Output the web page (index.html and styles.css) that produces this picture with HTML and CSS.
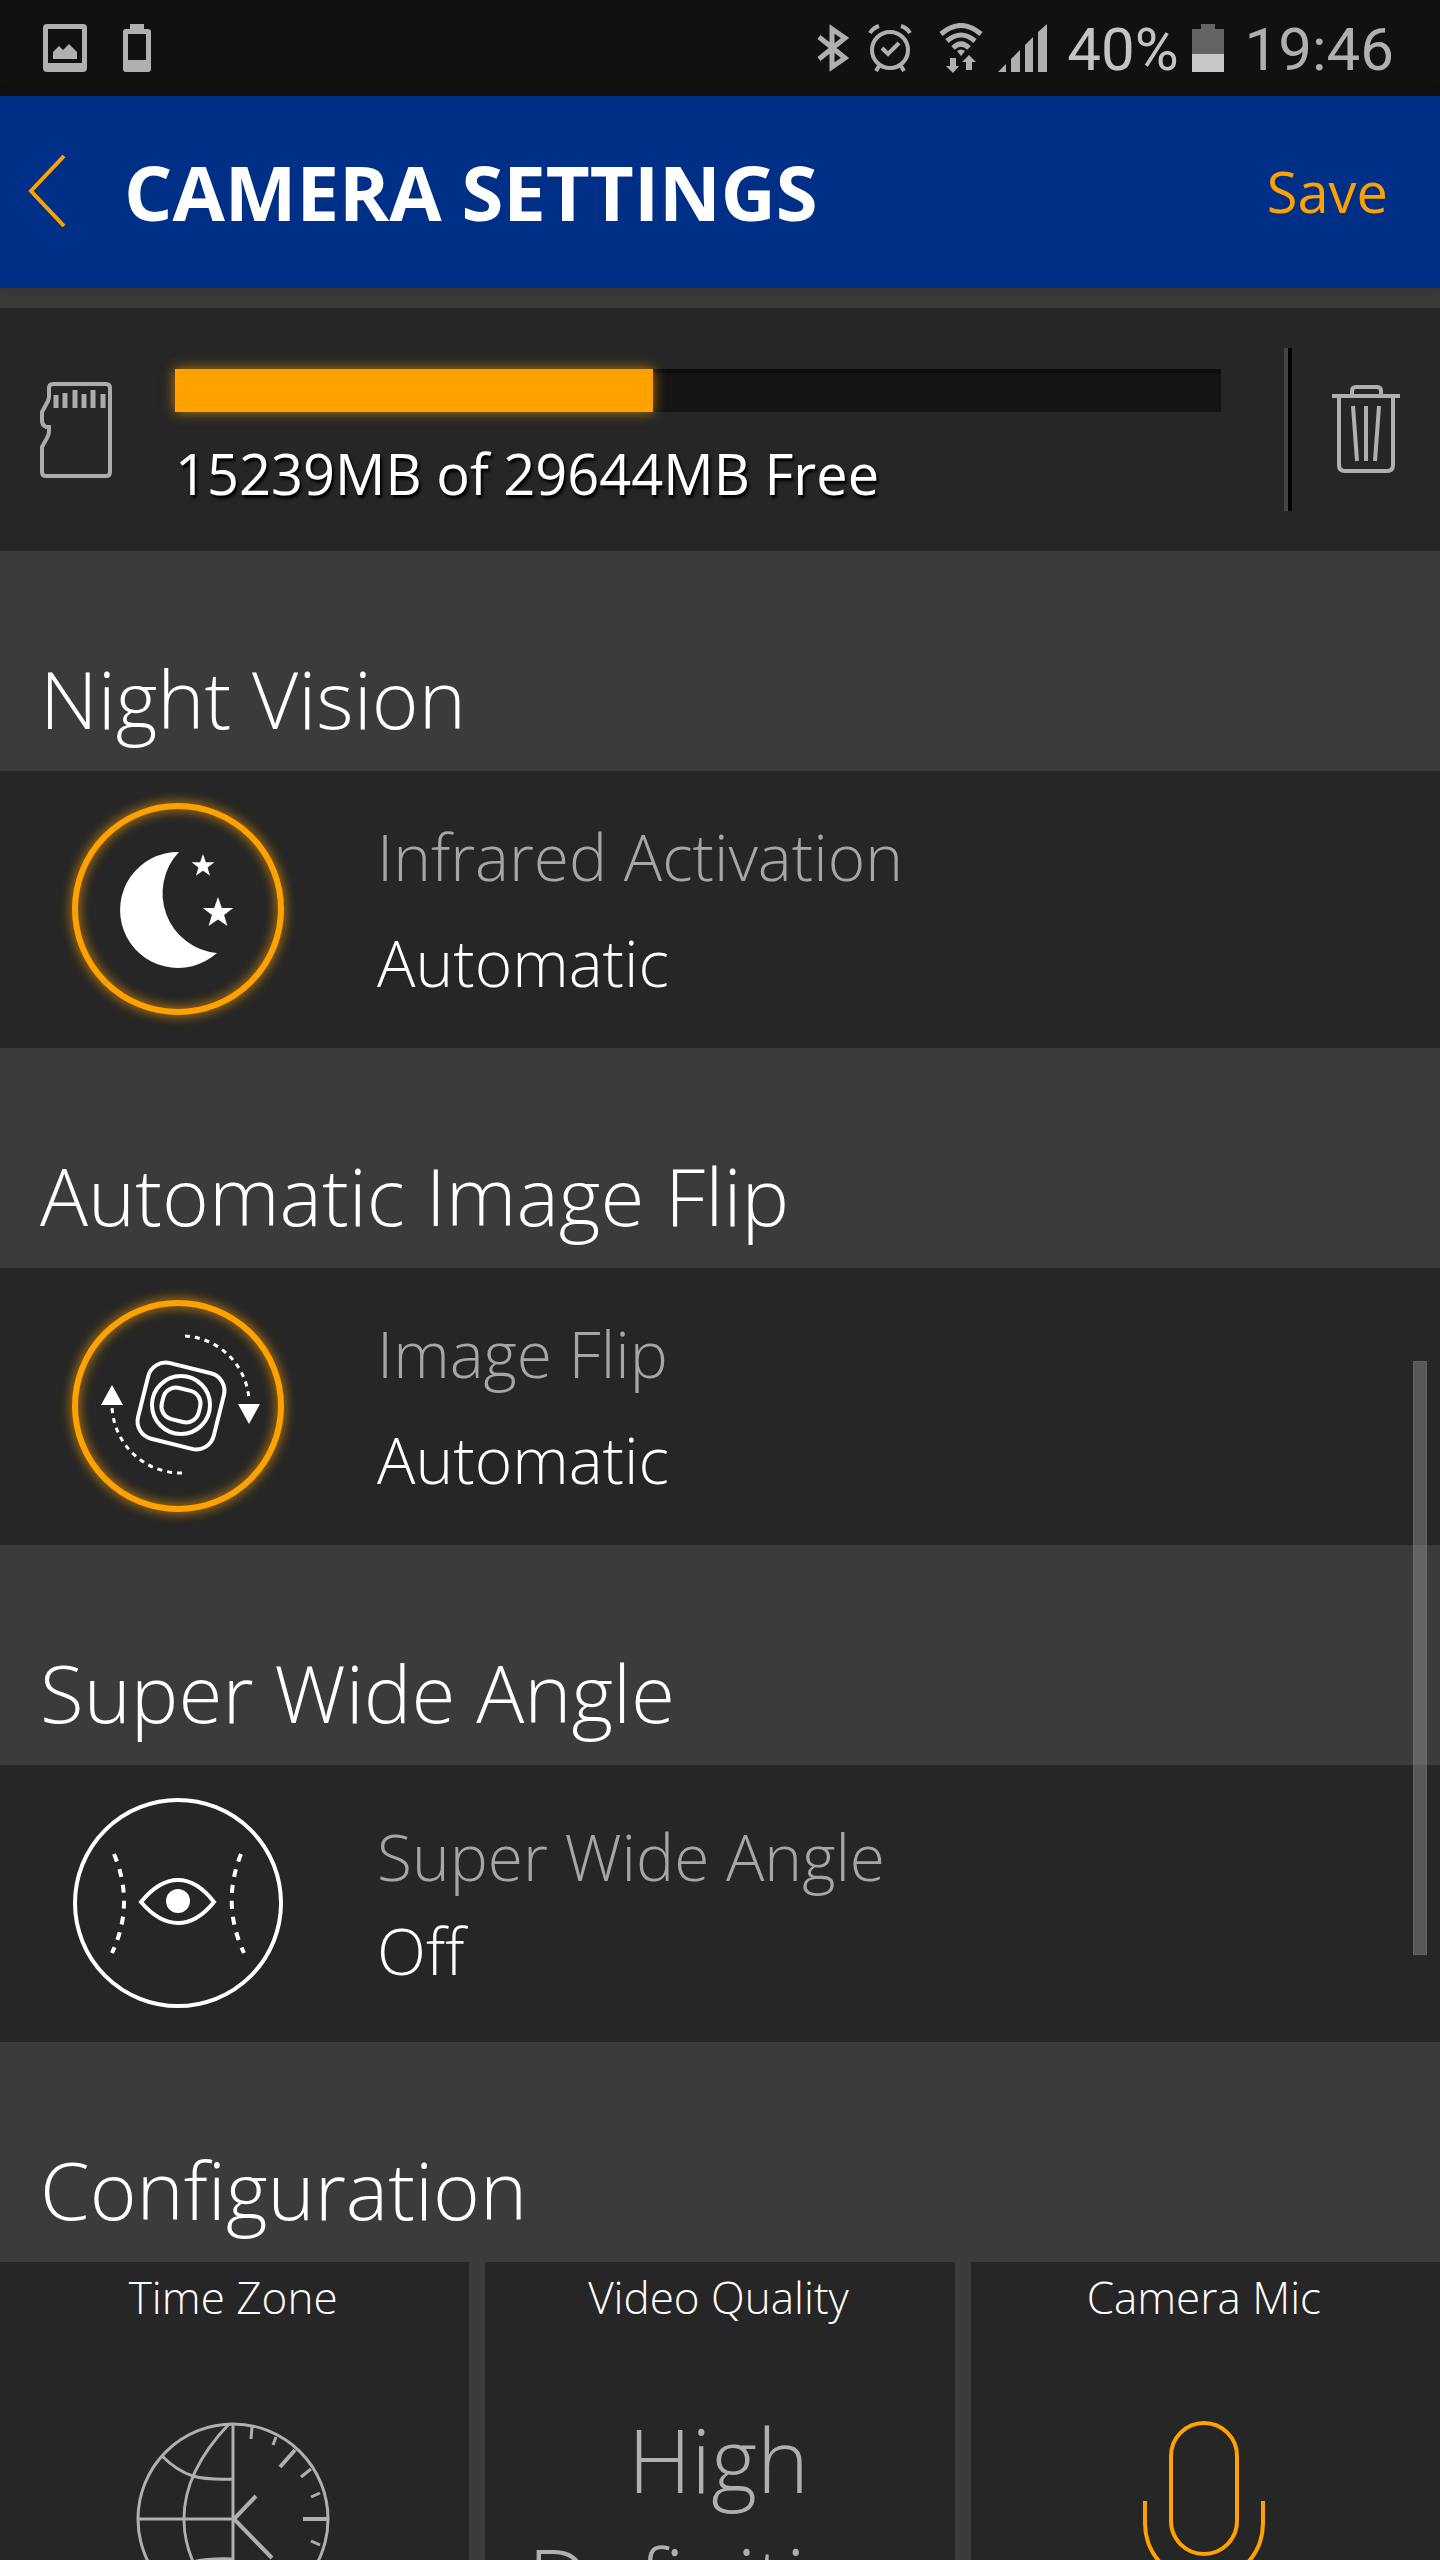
FILE: index.html
```
<!DOCTYPE html>
<html lang="en">
  <head>
    <meta charset="UTF-8" />
    <meta name="viewport" content="width=device-width, initial-scale=1.0" />
    <title>Camera Settings</title>
    <link rel="stylesheet" href="styles.css">
  </head>
  <body>
    <div class="status-bar">
      <div class="status-left">
        <svg width="44" height="48" viewBox="0 0 44 48" fill="#b0b0b0">
          <path fill-rule="evenodd" d="M4 0H40a4 4 0 0 1 4 4V44a4 4 0 0 1-4 4H4a4 4 0 0 1-4-4V4a4 4 0 0 1 4-4zM5 5V39H39V5z" />
          <path d="M10 35V28L16 22L20 26L26 20L34 28V35z" />
        </svg>
        <svg width="28" height="48" viewBox="0 0 28 48" fill="#b0b0b0">
          <path fill-rule="evenodd" d="M7 0H21V5H25a3 3 0 0 1 3 3V45a3 3 0 0 1-3 3H3a3 3 0 0 1-3-3V8a3 3 0 0 1 3-3H7zM5 10V36H23V10z" />
        </svg>
      </div>
      <div class="status-right">
        <svg class="bluetooth" width="32" height="48" viewBox="0 0 32 48" fill="none" stroke="#b0b0b0" stroke-width="5">
          <path d="M2 13L28 34L15 43V5L28 14L2 35" />
        </svg>
        <svg class="alarm" width="44" height="48" viewBox="0 0 44 48" fill="none" stroke="#b0b0b0" stroke-width="4">
          <circle cx="22" cy="26" r="18" />
          <path d="M14 24L20 30L31 19M2 9Q5 4 11 2M42 9Q39 4 33 2M11 42L8 47M33 42L36 47" />
        </svg>
        <svg class="wifi" width="44" height="50" viewBox="0 0 44 50" fill="none" stroke="#b0b0b0" stroke-width="5">
          <path d="M2 11Q22-6 42 11M8 18Q22 6 36 18M14 25Q22 17 30 25" />
          <path d="M18 28Q22 25 26 28L22 33z" fill="#b0b0b0" stroke="none" />
          <path d="M11 35H17V43H20L14 50L7 43H11zM27 47V39H23L30 32L37 39H33V47z" fill="#b0b0b0" stroke="none" />
        </svg>
        <svg class="signal" width="49" height="48" viewBox="0 0 49 48" fill="#b0b0b0">
          <path d="M0 48L8 40V48zM13 48V35L22 26V48zM27 48V21L35 13V48zM40 48V8L49 0V48z" />
        </svg>
        <span class="percent">40%</span>
        <svg class="battery" width="32" height="48" viewBox="0 0 32 48">
          <path d="M9 0H23V5H32V48H0V5H9z" fill="#646464" />
          <path d="M0 30H32V48H0z" fill="#c8c8c8" />
        </svg>
        <span class="clock">19:46</span>
      </div>
    </div>

    <header class="header">
      <button class="back" aria-label="Back">
        <svg width="38" height="72" viewBox="0 0 38 72" fill="none" stroke="#ffa200" stroke-width="4">
          <path d="M36 1L3 36L36 71" />
        </svg>
      </button>
      <h1>CAMERA SETTINGS</h1>
      <button class="save">Save</button>
    </header>

    <main class="content">
      <div class="card-row">
        <svg width="72" height="96" viewBox="0 0 72 96" fill="none" stroke="#acacac" stroke-width="4">
          <path d="M13 2H66Q70 2 70 6V90Q70 94 66 94H6Q2 94 2 90V65L7 56Q9 53 9 49V45H6Q2 43 2 39V30L8 19Q9 17 9 14V6Q9 2 13 2z" />
          <path stroke-width="5" d="M16 13V26M25 11V26M35 8V26M44 12V26M53 8V26M63 12V26" />
        </svg>
        <div class="storage">
          <div class="track" role="progressbar" aria-label="SD card storage" aria-valuemin="0" aria-valuemax="29644" aria-valuenow="13552">
            <div class="fill" style="width: 45.7%"></div>
          </div>
          <p>15239MB of 29644MB Free</p>
        </div>
        <div class="divider"></div>
        <button class="trash" aria-label="Format card">
          <svg width="68" height="90" viewBox="0 0 68 90" fill="none" stroke="#b0b0b0" stroke-width="4">
            <path d="M0 11H68M20 11V6Q20 2 24 2H45Q49 2 49 6V11M7 11V80Q7 86 13 86H55Q61 86 61 80V11M21 21L25 76M34 21V76M47 21L43 76" />
          </svg>
        </button>
      </div>

      <section>
        <h2>Night Vision</h2>
        <button class="row">
          <svg class="icon" width="210" height="210" viewBox="0 0 210 210">
            <circle class="ring-on" cx="105" cy="104" r="103" />
            <path fill="#fff" d="M106 47A58 58 0 1 0 144 148A60 60 0 0 1 106 47z" />
            <path fill="#fff" transform="translate(130 61) scale(12)" d="M0-1L.24-.32L.95-.31L.38.12L.59.81L0 .4L-.59.81L-.38.12L-.95-.31L-.24-.32z" />
            <path fill="#fff" transform="translate(145 108) scale(16)" d="M0-1L.24-.32L.95-.31L.38.12L.59.81L0 .4L-.59.81L-.38.12L-.95-.31L-.24-.32z" />
          </svg>
          <span class="row-text">
            <span class="label">Infrared Activation</span>
            <span class="value">Automatic</span>
          </span>
        </button>
      </section>

      <section>
        <h2>Automatic Image Flip</h2>
        <button class="row">
          <svg class="icon" width="210" height="210" viewBox="0 0 210 210">
            <circle class="ring-on" cx="105" cy="104" r="103" />
            <g fill="none" stroke="#fff" stroke-width="4">
              <rect x="69" y="65" width="78" height="78" rx="18" transform="rotate(14 108 104)" />
              <circle cx="108" cy="103" r="29" />
              <rect x="89" y="87" width="38" height="32" rx="13" transform="rotate(14 108 103)" />
              <path stroke-width="3" stroke-dasharray="5 5" d="M112 34A68 68 0 0 1 176 98M109 171A69 69 0 0 1 39 104" />
            </g>
            <path fill="#fff" d="M39 83L50 103H28zM176 122L165 102H187z" />
          </svg>
          <span class="row-text">
            <span class="label">Image Flip</span>
            <span class="value">Automatic</span>
          </span>
        </button>
      </section>

      <section>
        <h2>Super Wide Angle</h2>
        <button class="row">
          <svg class="icon" width="210" height="210" viewBox="0 0 210 210" fill="none" stroke="#fff" stroke-width="4">
            <circle cx="105" cy="104" r="103" />
            <path d="M68 103Q86 81 105 81T141 103Q124 124 105 124T68 103z" />
            <circle cx="105" cy="102" r="12" fill="#fff" stroke="none" />
            <path stroke-dasharray="8 8" d="M41 55Q62 105 39 154M168 55Q148 105 171 154" />
          </svg>
          <span class="row-text tight">
            <span class="label">Super Wide Angle</span>
            <span class="value">Off</span>
          </span>
        </button>
      </section>

      <section>
        <h2>Configuration</h2>
        <div class="tiles">
          <button class="tile">
            <span class="tile-title">Time Zone</span>
            <span class="tile-body">
              <svg width="196" height="196" viewBox="0 0 196 196" fill="none" stroke="#b0b0b0" stroke-width="3">
                <circle cx="98" cy="98" r="95" />
                <path d="M98 3V193M3 98H98M94 3C34 66 34 130 94 193M27 35Q42 50 58 55Q72 59 98 58M27 161Q42 146 58 141Q72 137 98 138" />
                <path d="M117 6L116 18M141 16L138 24M176 48L166 56M185 72L176 76M185 124L176 120M176 148L166 140M141 180L138 172M117 190L116 178" />
                <path stroke-width="4" d="M160 29L145 46M192 98H168M160 167L145 150M121 75L99 98L137 137" />
              </svg>
            </span>
          </button>
          <button class="tile">
            <span class="tile-title">Video Quality</span>
            <span class="tile-body quality">High Definition</span>
          </button>
          <button class="tile">
            <span class="tile-title">Camera Mic</span>
            <span class="tile-body">
              <svg width="122" height="196" viewBox="0 0 122 196" fill="none" stroke="#ffa200" stroke-width="4">
                <rect x="28" y="2" width="66" height="131" rx="33" />
                <path d="M2 80V102A59 59 0 0 0 120 102V80M61 161V194M30 194H92" />
              </svg>
            </span>
          </button>
        </div>
      </section>
      <div class="scroll-thumb"></div>
    </main>
  </body>
</html>
```

FILE: styles.css
```
* {
  box-sizing: border-box;
}

body {
  margin: 0;
  height: 100vh;
  display: flex;
  flex-direction: column;
  overflow: hidden;
  background-color: #3b3b3b;
  color: white;
  font-family: "Open Sans", sans-serif;
  font-weight: 300;
}

h1,
h2,
p {
  margin: 0;
}

button {
  margin: 0;
  padding: 0;
  border: none;
  background: none;
  color: inherit;
  font: inherit;
  cursor: pointer;
}

svg {
  display: block;
  flex: none;
}

.status-bar {
  flex: none;
  display: flex;
  justify-content: space-between;
  align-items: center;
  height: 96px;
  padding: 0 46px 0 43px;
  background-color: #111;
  color: #b0b0b0;
  font-family: Roboto, sans-serif;
  font-size: 60px;
  font-weight: 400;
  line-height: 72px;
}

.status-left {
  display: flex;
  gap: 36px;
}

.status-right {
  display: flex;
  align-items: center;
}

.percent,
.clock {
  padding-top: 3px;
}

.alarm {
  margin-left: 19px;
}

.wifi {
  margin-left: 27px;
}

.signal {
  margin-left: 15px;
}

.percent {
  margin-left: 20px;
  color: #c4c4c4;
}

.battery {
  margin: 0 21px 0 13px;
}

.header {
  position: relative;
  z-index: 1;
  flex: none;
  display: flex;
  align-items: center;
  height: 192px;
  padding: 0 52px 2px 28px;
  background-color: #002f87;
  box-shadow: 0 2px 16px rgba(0, 0, 0, 0.15);
}

.header h1 {
  flex: 1;
  margin-left: 58px;
  font-size: 76px;
  font-weight: 700;
}

.save {
  color: #ffa200;
  font-size: 56px;
  font-weight: 400;
}

.content {
  position: relative;
  flex: 1;
  min-height: 0;
  padding-top: 20px;
  overflow: hidden;
}

.card-row {
  display: flex;
  align-items: center;
  height: 243px;
  padding: 0 40px;
  background-color: #262626;
}

.storage {
  flex: 1;
  margin: 22px 63px 0 63px;
}

.track {
  height: 43px;
  background-color: #151515;
  box-shadow: inset 0 4px 2px #0c0c0c;
}

.fill {
  height: 100%;
  background-color: #ffa200;
  box-shadow: 0 0 12px rgba(255, 162, 0, 0.7);
}

.storage p {
  margin-top: 22px;
  font-size: 56px;
  font-weight: 400;
  line-height: 78px;
  text-shadow: 2px 3px 3px black;
}

.divider {
  width: 8px;
  height: 163px;
  margin-right: 40px;
  border-left: 4px solid #444;
  background-color: black;
}

h2 {
  padding: 92px 40px 19px;
  font-size: 80px;
  font-weight: 300;
  line-height: 109px;
}

.row {
  display: flex;
  align-items: center;
  gap: 94px;
  width: 100%;
  height: 277px;
  padding: 0 73px;
  background-color: #262626;
  text-align: left;
}

.icon {
  overflow: visible;
}

.ring-on {
  fill: none;
  stroke: #ffa200;
  stroke-width: 6;
  filter: drop-shadow(0 0 6px #ffa200);
}

.row-text {
  display: flex;
  flex-direction: column;
  font-size: 64px;
  line-height: 106px;
}

.tight {
  line-height: 94px;
}

.label {
  color: #a6a6a6;
}

.tiles {
  display: grid;
  grid-template-columns: repeat(3, 1fr);
  gap: 16px;
}

.tile {
  display: flex;
  flex-direction: column;
  align-items: center;
  padding: 5px 3px 0 0;
  background-color: #262626;
}

.tile-title {
  font-size: 44px;
  line-height: 60px;
}

.tile-body {
  display: flex;
  align-items: center;
  justify-content: center;
  height: 384px;
}

.quality {
  width: 400px;
  color: #b0b0b0;
  font-size: 88px;
  line-height: 120px;
}

.scroll-thumb {
  position: absolute;
  top: 1073px;
  right: 13px;
  width: 14px;
  height: 594px;
  border: 1px solid rgba(128, 128, 128, 0.3);
  background-color: rgba(150, 150, 150, 0.45);
}
```
